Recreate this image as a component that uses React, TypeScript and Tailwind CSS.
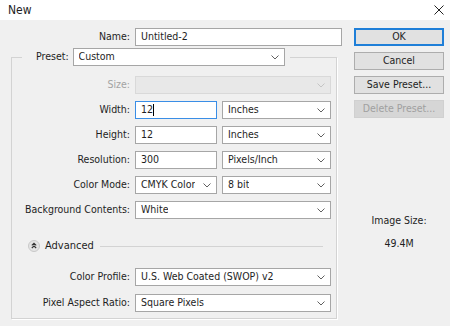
import React from 'react';

const font = { fontFamily: '"DejaVu Sans Condensed", Tahoma, "Liberation Sans", sans-serif' };

function Chevron({ disabled }: { disabled?: boolean }) {
    return (
        <svg width="8" height="5" viewBox="0 0 8 5" className="shrink-0">
            <path d="M0.5 0.5 L4 4 L7.5 0.5" fill="none" stroke={disabled ? '#c4c4c4' : '#606060'} strokeWidth="1" />
        </svg>
    );
}

function Select({ value, w, disabled }: { value?: string; w: string; disabled?: boolean }) {
    return (
        <div className={`${w} h-[18px] flex items-center justify-between pl-[5px] pr-[5px] border ${disabled ? 'border-[#d9d9d9] bg-[#e8e8e8]' : 'border-[#a6a6a6] bg-white'}`}>
            <span className="truncate">{value}</span>
            <Chevron disabled={disabled} />
        </div>
    );
}

function Input({ value, w, focused }: { value: string; w: string; focused?: boolean }) {
    return (
        <div className={`${w} h-[18px] flex items-center pl-[5px] bg-white border ${focused ? 'border-[#3a8ee6]' : 'border-[#a6a6a6]'}`}>
            <span>{value}</span>
            {focused && <span className="w-px h-[12px] bg-black" />}
        </div>
    );
}

function Row({ label, children, disabled }: { label: string; children: React.ReactNode; disabled?: boolean }) {
    return (
        <div className="flex items-center gap-[5px] h-[18px]">
            <span className={`w-[118px] text-right ${disabled ? 'text-[#a3a3a3]' : ''}`}>{label}</span>
            <div className="flex gap-[5px]">{children}</div>
        </div>
    );
}

function Button({ label, primary, disabled }: { label: string; primary?: boolean; disabled?: boolean }) {
    return (
        <div
            className={`w-[90px] h-[18px] flex items-center justify-center ${
                primary
                    ? 'bg-[#e1e1e1] border-2 border-[#1f7fd8]'
                    : disabled
                    ? 'bg-[#d6d6d6] border border-[#d0d0d0] text-[#a0a0a0]'
                    : 'bg-[#e1e1e1] border border-[#adadad]'
            }`}
        >
            {label}
        </div>
    );
}

export default function App() {
    return (
        <div className="w-[450px] h-[326px] bg-[#f0f0f0] text-[10.5px] text-[#1e1e1e] flex flex-col overflow-hidden" style={font}>
            <div className="h-[20px] bg-white flex items-center justify-between pl-[8px] pr-[6px] shrink-0">
                <span className="text-[12px]">New</span>
                <svg width="10" height="10" viewBox="0 0 10 10">
                    <path d="M0.5 0.5 L9.5 9.5 M9.5 0.5 L0.5 9.5" stroke="#222" strokeWidth="1" />
                </svg>
            </div>

            <div className="flex pt-[8px]">
                <div className="flex flex-col pl-[11px] w-[343px]">
                    <div className="flex items-center gap-[5px] h-[18px]">
                        <span className="w-[119px] text-right">Name:</span>
                        <Input value="Untitled-2" w="w-[207px]" />
                    </div>

                    <fieldset className="w-[326px] mt-[2px] border border-[#d3d3d3] pb-[6px] shadow-[1px_1px_0_#ffffff]">
                        <legend className="ml-[10px] pl-[14px] pr-[5px] flex items-center gap-[4px]">
                            <span>Preset:</span>
                            <Select value="Custom" w="w-[212px]" />
                        </legend>

                        <div className="flex flex-col gap-[7px] pt-[10px]">
                            <Row label="Size:" disabled>
                                <Select w="w-[196px]" disabled />
                            </Row>
                            <Row label="Width:">
                                <Input value="12" w="w-[82px]" focused />
                                <Select value="Inches" w="w-[109px]" />
                            </Row>
                            <Row label="Height:">
                                <Input value="12" w="w-[82px]" />
                                <Select value="Inches" w="w-[109px]" />
                            </Row>
                            <Row label="Resolution:">
                                <Input value="300" w="w-[82px]" />
                                <Select value="Pixels/Inch" w="w-[109px]" />
                            </Row>
                            <Row label="Color Mode:">
                                <Select value="CMYK Color" w="w-[82px]" />
                                <Select value="8 bit" w="w-[109px]" />
                            </Row>
                            <Row label="Background Contents:">
                                <Select value="White" w="w-[196px]" />
                            </Row>
                        </div>

                        <div className="flex items-center h-[18px] mt-[18px] pl-[16px] pr-[13px] gap-[5px]">
                            <svg width="12" height="12" viewBox="0 0 12 12" className="shrink-0">
                                <circle cx="6" cy="6" r="5.5" fill="#e4e4e4" stroke="#c8c8c8" />
                                <path d="M3.8 5.3 L6 3.3 L8.2 5.3 M3.8 8 L6 6 L8.2 8" fill="none" stroke="#333" strokeWidth="1.1" />
                            </svg>
                            <span className="text-[11px]">Advanced</span>
                            <div className="flex-1 h-px bg-[#d3d3d3] ml-[1px]" />
                        </div>

                        <div className="flex flex-col gap-[8px] mt-[13px]">
                            <Row label="Color Profile:">
                                <Select value="U.S. Web Coated (SWOP) v2" w="w-[196px]" />
                            </Row>
                            <Row label="Pixel Aspect Ratio:">
                                <Select value="Square Pixels" w="w-[196px]" />
                            </Row>
                        </div>
                    </fieldset>
                </div>

                <div className="flex flex-col items-center ml-[11px] w-[90px]">
                    <div className="flex flex-col gap-[6px]">
                        <Button label="OK" primary />
                        <Button label="Cancel" />
                        <Button label="Save Preset..." />
                        <Button label="Delete Preset..." disabled />
                    </div>
                    <div className="mt-[95px] flex flex-col items-center gap-[7px]">
                        <span>Image Size:</span>
                        <span>49.4M</span>
                    </div>
                </div>
            </div>
        </div>
    );
}
